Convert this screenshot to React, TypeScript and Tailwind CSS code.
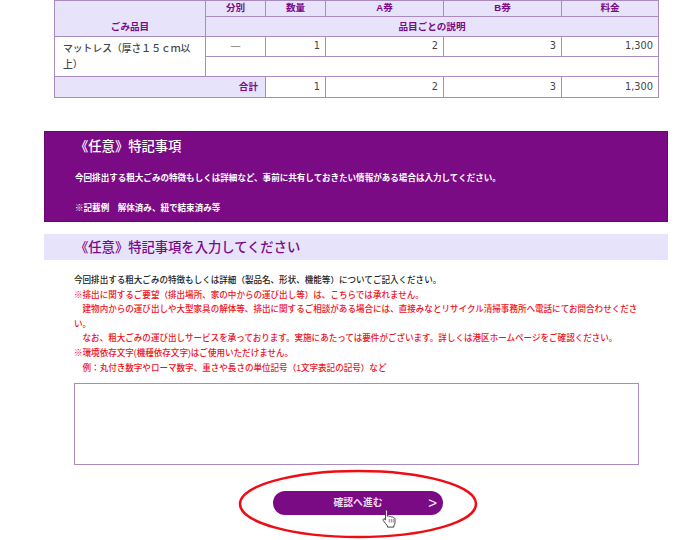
import React from "react";

const th = "border border-[#a98bc0] bg-[#e6e3fa] text-[#7b0a85] font-bold text-center p-0";
const td = "border border-[#a98bc0] bg-white text-[#444444] text-right pr-[5px] py-0 text-[9.8px] font-['DejaVu_Sans']";

export default function App() {
  return (
    <div className="relative w-[700px] h-[540px] overflow-hidden bg-white text-[8.55px] leading-[14.6px] font-medium font-['Liberation_Sans','Noto_Sans_CJK_JP',sans-serif]">
      <table className="ml-[54px] w-[604px] table-fixed border-collapse text-[9.6px]">
        <colgroup>
          <col className="w-[151px]" />
          <col className="w-[60px]" />
          <col className="w-[60px]" />
          <col className="w-[118px]" />
          <col className="w-[118px]" />
          <col className="w-[97px]" />
        </colgroup>
        <tbody>
          <tr className="h-[16px]">
            <th rowSpan={2} className={th + " align-bottom pb-[1px]"}>ごみ品目</th>
            <th className={th}>分別</th>
            <th className={th}>数量</th>
            <th className={th}>A券</th>
            <th className={th}>B券</th>
            <th className={th}>料金</th>
          </tr>
          <tr className="h-[20px]">
            <th colSpan={5} className={th + " pt-[1px]"}>品目ごとの説明</th>
          </tr>
          <tr className="h-[20px]">
            <td rowSpan={2} className="border border-[#a98bc0] bg-white text-[#444444] text-left pl-[8px] pr-[6px] align-middle text-[9.8px] leading-[15.5px]">マットレス（厚さ１５ｃｍ以上）</td>
            <td className="border border-[#a98bc0] bg-white text-[#444444] text-center">―</td>
            <td className={td}>1</td>
            <td className={td}>2</td>
            <td className={td}>3</td>
            <td className={td}>1,300</td>
          </tr>
          <tr className="h-[20px]">
            <td colSpan={5} className="border border-[#a98bc0] bg-white"></td>
          </tr>
          <tr className="h-[21px]">
            <th colSpan={2} className={th + " text-right pr-[7px]"}>合計</th>
            <td className={td}>1</td>
            <td className={td}>2</td>
            <td className={td}>3</td>
            <td className={td}>1,300</td>
          </tr>
        </tbody>
      </table>

      <section className="ml-[44px] mt-[33px] w-[624px] h-[91px] bg-[#7b0a85] border border-[#68076f] text-white pl-[30px] font-bold">
        <h2 className="mt-[6px] text-[13.3px] leading-[18px] font-medium">《任意》特記事項</h2>
        <p className="mt-[15px]">今回排出する粗大ごみの特徴もしくは詳細など、事前に共有しておきたい情報がある場合は入力してください。</p>
        <p className="mt-[15px]">※記載例　解体済み、紐で結束済み等</p>
      </section>

      <h2 className="ml-[44px] mt-[12px] w-[624px] h-[26px] bg-[#e6e3fa] text-[#7b0a85] pl-[31px] text-[13.3px] leading-[27px] font-medium">《任意》特記事項を入力してください</h2>

      <div className="ml-[74px] mt-[13px] w-[565px]">
        <p className="text-[#222222]">今回排出する粗大ごみの特徴もしくは詳細（製品名、形状、機能等）についてご記入ください。</p>
        <div className="text-[#f0101c]">
          <p>※排出に関するご要望（排出場所、家の中からの運び出し等）は、こちらでは承れません。</p>
          <p>　建物内からの運び出しや大型家具の解体等、排出に関するご相談がある場合には、直接みなとリサイクル清掃事務所へ電話にてお問合わせください。</p>
          <p>　なお、粗大ごみの運び出しサービスを承っております。実施にあたっては要件がございます。詳しくは港区ホームページをご確認ください。</p>
          <p>※環境依存文字(機種依存文字)はご使用いただけません。</p>
          <p>　例：丸付き数字やローマ数字、重さや長さの単位記号（1文字表記の記号）など</p>
        </div>
        <textarea className="block mt-[8px] w-[565px] h-[82px] border border-[#a98bc0] bg-white resize-none" aria-label="特記事項" />
      </div>

      <div className="relative mt-[26px] ml-[273px] w-[170px]">
        <button className="relative flex h-[24px] w-[170px] items-center justify-center rounded-full bg-[#7b0a85] pt-[1px] text-[#efdcf2] text-[9.8px] font-bold">
          確認へ進む
          <span className="absolute right-[6px] top-[2px] text-[15px] leading-[20px] font-normal text-white">&gt;</span>
        </button>
        <svg className="absolute left-[-37px] top-[-23px]" width="244" height="72" viewBox="0 0 244 72" fill="none">
          <ellipse cx="122" cy="36" rx="118" ry="33" stroke="#ee0d14" strokeWidth="2.5" />
        </svg>
        <svg className="absolute left-[108px] top-[17px]" width="16" height="20" viewBox="0 0 16 20">
          <path d="M5 1.6c.9 0 1.4.6 1.4 1.5v5.1l.8-.2c.7-.1 1.2.1 1.5.5.7-.3 1.4-.1 1.8.5.7-.2 1.4 0 1.8.6.9-.1 1.7.5 1.7 1.5v3c0 1.8-.6 2.8-1.2 3.8v1.2H6.5v-1c-1-1.4-2.4-3.2-4-5.2-.6-.8-.5-1.6.1-2 .6-.4 1.3-.2 1 .2l.9 1V3.1c0-.9.5-1.5 1.5-1.5z" fill="#fff" stroke="#333" strokeWidth="0.9" strokeLinejoin="round" />
          <path d="M8.3 11v3.5M10.3 11v3.5M12.2 11v3.5" stroke="#555" strokeWidth="0.7" />
        </svg>
      </div>
    </div>
  );
}
